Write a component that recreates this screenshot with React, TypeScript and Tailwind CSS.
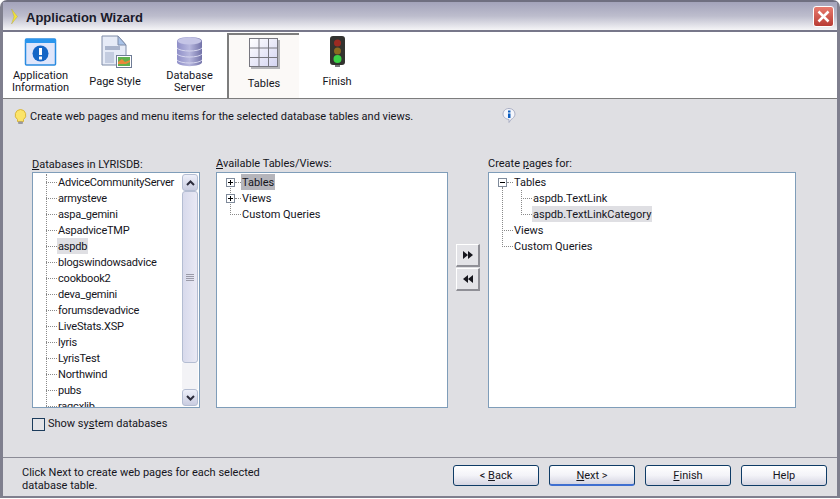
const databases = [
  "AdviceCommunityServer",
  "armysteve",
  "aspa_gemini",
  "AspadviceTMP",
  "aspdb",
  "blogswindowsadvice",
  "cookbook2",
  "deva_gemini",
  "forumsdevadvice",
  "LiveStats.XSP",
  "lyris",
  "LyrisTest",
  "Northwind",
  "pubs",
  "ragcxlib",
]

function AppInfoIcon() {
  return (
    <svg width="33" height="28" viewBox="0 0 33 28">
      <rect x="1.500" y="1" width="30" height="26" rx="1" fill="#dfe6fb" stroke="#2a8be0" strokeWidth="1.500" />
      <rect x="1" y="1" width="31" height="4" fill="#2a96ee" />
      <circle cx="16.500" cy="15.500" r="8" fill="#1465c6" />
      <rect x="15" y="10" width="3" height="7" fill="#fff" />
      <rect x="15" y="18.500" width="3" height="3" fill="#fff" />
    </svg>
  )
}

function PageIcon() {
  return (
    <svg className="ml-[3px]" width="31" height="33" viewBox="0 0 31 33">
      <path d="M1 1h16l8 9v20H1z" fill="#e6ebf7" stroke="#7f8ca8" />
      <path d="M17 1l8 9h-8z" fill="#a9c3e8" stroke="#7f8ca8" />
      <rect x="4" y="11" width="15" height="4" fill="#a9b4cc" />
      <rect x="4" y="17" width="9" height="11" fill="#c3cce0" />
      <rect x="15.500" y="20.500" width="15" height="12" fill="#fff" stroke="#6f7c96" />
      <rect x="17" y="22" width="12" height="9" fill="#5fb04c" />
      <path d="M17 27l4-3 3 3 5-2v2l-4 2h-8z" fill="#e8883a" />
    </svg>
  )
}

function DatabaseIcon() {
  return (
    <svg width="27" height="31" viewBox="0 0 27 31">
      <defs>
        <linearGradient id="db" x1="0" x2="1" y1="0" y2="0">
          <stop offset="0" stopColor="#8f8fc8" />
          <stop offset="0.5" stopColor="#b7b7de" />
          <stop offset="1" stopColor="#7272a8" />
        </linearGradient>
      </defs>
      <path d="M1 5c0-5.500 25-5.500 25 0v21c0 5.500-25 5.500-25 0z" fill="url(#db)" />
      <ellipse cx="13.500" cy="5" rx="12" ry="3.500" fill="#c5c5e6" />
      <path d="M1 12c3 4 22 4 25 0M1 18c3 4 22 4 25 0M1 24c3 4 22 4 25 0" fill="none" stroke="#d6d6ee" />
    </svg>
  )
}

function GridIcon() {
  return (
    <svg width="31" height="31" viewBox="0 0 31 31">
      <defs>
        <linearGradient id="cell" x1="0" x2="1" y1="0" y2="1">
          <stop offset="0" stopColor="#ffffff" />
          <stop offset="1" stopColor="#d4d4f2" />
        </linearGradient>
      </defs>
      <rect x="2" y="2" width="29" height="29" fill="#b4b4b8" />
      <rect x="0.500" y="0.500" width="28" height="28" fill="url(#cell)" stroke="#77777f" />
      <path d="M10 1v27M19.500 1v27M1 10h27M1 19.500h27" stroke="#77777f" />
    </svg>
  )
}

function TrafficLightIcon() {
  return (
    <svg width="17" height="31" viewBox="0 0 17 31">
      <rect x="1" y="0" width="15" height="29" rx="3" fill="#33332f" />
      <circle cx="8.500" cy="7" r="3.500" fill="#9c2a22" />
      <circle cx="8.500" cy="15" r="3.500" fill="#8a6a20" />
      <circle cx="8.500" cy="23" r="4" fill="#3bd246" />
      <rect x="6" y="29" width="5" height="2" fill="#77777a" />
    </svg>
  )
}

function BulbIcon() {
  return (
    <svg width="13" height="16" viewBox="0 0 13 16">
      <path d="M6.500 0.500a5.500 5.500 0 0 1 3 10v2h-6v-2a5.500 5.500 0 0 1 3-10z" fill="#fbe46a" stroke="#d9b53a" />
      <rect x="4" y="12.500" width="5" height="2.500" rx="1" fill="#9a9aa0" />
    </svg>
  )
}

function InfoBubbleIcon() {
  return (
    <svg width="14" height="16" viewBox="0 0 14 16">
      <path d="M7 0.500c3.500 0 6 2.500 6 5.500 0 2.500-2 4.500-4 5.500l-2 3v-3C3 11 1 8.500 1 6c0-3 2.500-5.500 6-5.500z" fill="#f5f6fb" stroke="#a9aec4" />
      <rect x="6" y="2.500" width="2.500" height="2" fill="#0f5fc0" />
      <rect x="6" y="5.500" width="2.500" height="4.500" fill="#0f5fc0" />
    </svg>
  )
}

function ToolItem({ width, label, active, icon }: { width: string; label: string[]; active?: boolean; icon: React.ReactNode }) {
  return (
    <div
      className={`${width} flex flex-col items-center ${
        active ? "mt-px h-[65px] bg-[#fbf9f7] border-t-2 border-l-2 border-[#7d7d7d] pt-[2px]" : "pt-[3px]"
      }`}
    >
      <div className="h-[33px] flex items-center justify-center">{icon}</div>
      <div className={`flex-1 flex flex-col justify-center text-center leading-[12px] ${active ? "pb-px" : "pb-[3px]"}`}>
        {label.map((l) => (
          <div key={l}>{l}</div>
        ))}
      </div>
    </div>
  )
}

function PlusBox({ minus }: { minus?: boolean }) {
  return (
    <span className="w-[9px] h-[9px] border border-[#7f8a9a] bg-white flex items-center justify-center relative shrink-0">
      <span className="absolute w-[5px] h-px bg-black" />
      {!minus && <span className="absolute w-px h-[5px] bg-black" />}
    </span>
  )
}

function TreeRow({ label, pad, selected, box, selColor }: { label: string; pad: string; selected?: boolean; box?: "plus" | "minus"; selColor?: string }) {
  return (
    <div className={`h-[16px] flex items-center ${pad}`}>
      {box ? <PlusBox minus={box === "minus"} /> : null}
      <span className={`border-t border-dotted border-[#8a8a8a] ${box ? "w-[6px]" : "w-[11px]"} shrink-0`} />
      <span className={`px-px pt-px leading-[15px] whitespace-nowrap ${selected ? selColor : ""}`}>{label}</span>
    </div>
  )
}

function ScrollButton({ up }: { up?: boolean }) {
  return (
    <div className="h-[17px] rounded-[3px] border border-[#b4bdd2] bg-gradient-to-b from-[#eef0fa] to-[#c9cce0] flex items-center justify-center shrink-0">
      <svg width="9" height="6" viewBox="0 0 9 6">
        <path d={up ? "M1 5l3.500-3.500L8 5" : "M1 1l3.500 3.500L8 1"} fill="none" stroke="#2c2c3c" strokeWidth="2" />
      </svg>
    </div>
  )
}

function MoveButton({ back }: { back?: boolean }) {
  return (
    <div className="h-[23px] w-[24px] bg-[#e3e3e7] border-r-2 border-b-2 border-[#8f8f96] border-t border-l border-t-white border-l-white flex items-center justify-center">
      <svg width="10" height="8" viewBox="0 0 10 8">
        <path d={back ? "M5 0v8L0 4zM10 0v8L5 4z" : "M0 0v8l5-4zM5 0v8l5-4z"} fill="#15151c" />
      </svg>
    </div>
  )
}

function WizardButton({ children, focused }: { children: React.ReactNode; focused?: boolean }) {
  return (
    <div
      className={`w-[86px] h-[21px] pt-[2px] rounded-[3px] border border-[#0f3c66] bg-gradient-to-b from-white via-[#f3f3f8] to-[#d5d5e2] flex items-center justify-center ${
        focused ? "border-b-2 border-b-[#3f6fd0]" : ""
      }`}
    >
      {children}
    </div>
  )
}

export default function App() {
  return (
    <div className="w-[840px] h-[499px] bg-white font-['Roboto',sans-serif] text-[11px] text-[#15151c] overflow-hidden">
      <div className="h-[498px] flex flex-col rounded-t-[7px] border-t-2 border-x-[3px] border-b-2 border-[#7f7f8e] border-t-[#6f6f80] bg-[#dfdfe3]">
        {/* Title bar */}
        <div className="h-[28px] flex items-center justify-between pl-[8px] pr-[3px] bg-gradient-to-b from-[#a3a3ba] via-[#bdbdcd] to-[#f5f5f7]">
          <div className="flex items-center gap-[8px]">
            <svg width="7" height="15" viewBox="0 0 7 15">
              <path d="M0.500 0l6 7.500-6 7.500 2.500-7.500z" fill="#f2e23a" stroke="#a8a24a" strokeWidth="0.400" />
            </svg>
            <span className="mt-[3px] font-bold text-[13px] font-['Liberation_Sans',sans-serif] text-[#1a1a2a]">Application Wizard</span>
          </div>
          <div className="w-[21px] h-[21px] rounded-[3px] bg-gradient-to-b from-[#e87a6e] to-[#b83a34] border border-white flex items-center justify-center">
            <svg width="13" height="13" viewBox="0 0 13 13">
              <path d="M1.500 1.500l10 10M11.500 1.500l-10 10" stroke="#fff" strokeWidth="2.500" />
            </svg>
          </div>
        </div>

        {/* Step toolbar */}
        <div className="h-[69px] flex bg-white border-t-2 border-[#77778a] border-b border-b-[#7d7d7d]">
          <ToolItem width="w-[75px]" label={["Application", "Information"]} icon={<AppInfoIcon />} />
          <ToolItem width="w-[74px]" label={["Page Style"]} icon={<PageIcon />} />
          <ToolItem width="w-[75px]" label={["Database", "Server"]} icon={<DatabaseIcon />} />
          <ToolItem width="w-[72px]" label={["Tables"]} active icon={<GridIcon />} />
          <ToolItem width="w-[76px]" label={["Finish"]} icon={<TrafficLightIcon />} />
        </div>

        {/* Content */}
        <div className="flex-1 flex flex-col min-h-0">
          <div className="h-[36px] flex items-center pl-[11px] relative">
            <BulbIcon />
            <span className="ml-[3px]">Create web pages and menu items for the selected database tables and views.</span>
            <span className="absolute left-[499px] top-[9px]">
              <InfoBubbleIcon />
            </span>
          </div>

          <div className="flex pl-[29px] pt-[21px]">
            <div className="w-[168px]">
              <div className="h-[16px] pt-[2px] leading-[14px]">
                <span className="underline">D</span>atabases in LYRISDB:
              </div>
              <div className="h-[236px] border border-[#7f9db9] bg-white flex overflow-hidden">
                <div className="flex-1 min-w-0 pt-px overflow-hidden">
                  <div className="ml-[13px] border-l border-dotted border-[#8a8a8a] tracking-[-0.2px]">
                    {databases.map((d) => (
                      <TreeRow key={d} label={d} pad="-ml-px" selected={d === "aspdb"} selColor="bg-[#dfdfe3]" />
                    ))}
                  </div>
                </div>
                <div className="w-[16px] mr-px my-px flex flex-col shrink-0">
                  <ScrollButton up />
                  <div className="h-[172px] rounded-[3px] border border-[#b4bdd2] bg-gradient-to-r from-[#d8daec] to-[#e9e9f4] flex flex-col gap-px items-center justify-center shrink-0">
                    <div className="w-[8px] h-px bg-[#9a9aa8]" />
                    <div className="w-[8px] h-px bg-[#9a9aa8]" />
                    <div className="w-[8px] h-px bg-[#9a9aa8]" />
                    <div className="w-[8px] h-px bg-[#9a9aa8]" />
                  </div>
                  <div className="flex-1 bg-[#f3f3f6]" />
                  <ScrollButton />
                </div>
              </div>
              <div className="flex items-center mt-[8px]">
                <span className="w-[13px] h-[13px] border border-[#1c3c5c] bg-[#e4e4e8]" />
                <span className="ml-[3px]">
                  Show sy<span className="underline">s</span>tem databases
                </span>
              </div>
            </div>

            <div className="w-[232px] ml-[16px]">
              <div className="h-[16px] pt-px leading-[14px]">
                <span className="underline">A</span>vailable Tables/Views:
              </div>
              <div className="relative h-[236px] border border-[#7f9db9] bg-white pt-px">
                <span className="absolute left-[13px] top-[10px] h-[32px] border-l border-dotted border-[#8a8a8a]" />
                <TreeRow label="Tables" pad="pl-[9px]" box="plus" selected selColor="bg-[#b5b5bb]" />
                <TreeRow label="Views" pad="pl-[9px]" box="plus" />
                <TreeRow label="Custom Queries" pad="pl-[13px]" />
              </div>
            </div>

            <div className="w-[24px] ml-[8px] pt-[88px] flex flex-col gap-px">
              <MoveButton />
              <MoveButton back />
            </div>

            <div className="w-[308px] ml-[8px]">
              <div className="h-[16px] pt-px leading-[14px]">
                Create <span className="underline">p</span>ages for:
              </div>
              <div className="relative h-[236px] border border-[#7f9db9] bg-white pt-px">
                <span className="absolute left-[13px] top-[14px] h-[60px] border-l border-dotted border-[#8a8a8a]" />
                <span className="absolute left-[32px] top-[17px] h-[25px] border-l border-dotted border-[#8a8a8a]" />
                <TreeRow label="Tables" pad="pl-[9px]" box="minus" />
                <TreeRow label="aspdb.TextLink" pad="pl-[32px]" />
                <TreeRow label="aspdb.TextLinkCategory" pad="pl-[32px]" selected selColor="bg-[#dfdfe3]" />
                <TreeRow label="Views" pad="pl-[13px]" />
                <TreeRow label="Custom Queries" pad="pl-[13px]" />
              </div>
            </div>
          </div>
        </div>

        {/* Footer */}
        <div className="h-[39px] border-t border-[#8b8b96] flex justify-between pl-[19px] pr-[10px]">
          <div className="leading-[13px] w-[260px] pt-[8px]">Click Next to create web pages for each selected database table.</div>
          <div className="flex gap-[10px] pt-[7px]">
            <WizardButton>
              &lt;&nbsp;<span className="underline">B</span>ack
            </WizardButton>
            <WizardButton focused>
              <span className="underline">N</span>ext &gt;
            </WizardButton>
            <WizardButton>
              <span className="underline">F</span>inish
            </WizardButton>
            <WizardButton>Help</WizardButton>
          </div>
        </div>
      </div>
    </div>
  )
}
